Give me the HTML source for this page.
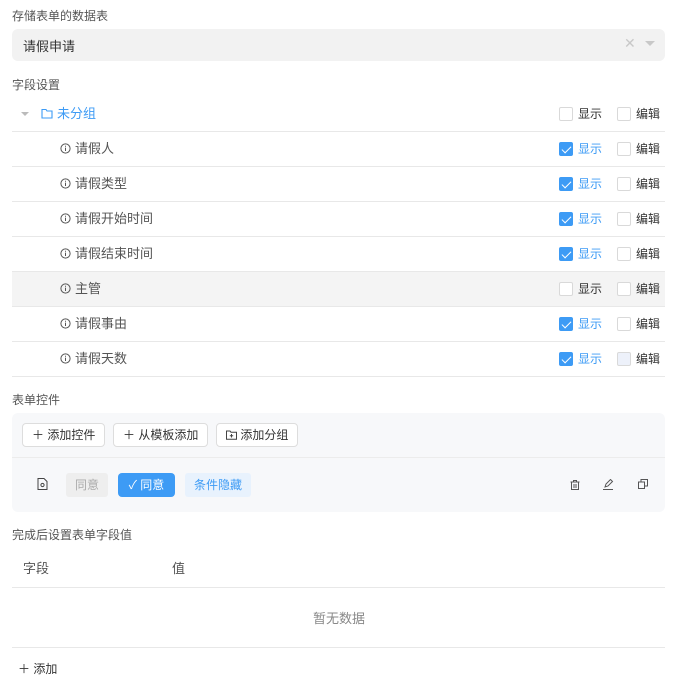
<!DOCTYPE html>
<html><head><meta charset="utf-8"><style>
*{box-sizing:border-box;margin:0;padding:0}
body{width:684px;height:684px;background:#fff;font-family:"Liberation Sans","Noto Sans CJK SC",sans-serif;font-size:13px;color:#333;position:relative;overflow:hidden}
.abs{position:absolute}
.lbl{position:absolute;left:12px;font-size:12px;color:#555}
.sel{left:12px;top:29px;width:653px;height:32px;background:#f2f2f2;border-radius:6px}
.row{position:absolute;left:12px;width:653px;height:35px;border-bottom:1px solid #e8e8e8}
.row .name{position:absolute;left:48px;top:6px;color:#555;font-size:13px}
.row .name svg{vertical-align:-1px;margin-right:4px}
.cb{position:absolute;top:10px;width:14px;height:14px;border:1px solid #d9d9d9;border-radius:2px;background:#fff}
.cb.on{background:#3d9bf5;border-color:#3d9bf5}
.cb.on::after{content:"";position:absolute;left:4px;top:1px;width:4px;height:8px;border:solid #fff;border-width:0 1.5px 1.5px 0;transform:rotate(45deg)}
.t{position:absolute;top:8px;font-size:12px;color:#333}
.t.on{color:#3d9bf5}
.btn{position:absolute;top:10px;height:24px;border:1px solid #ddd;border-radius:4px;background:#fff;font-size:12px;line-height:22px;padding:0 9px;color:#333}
</style></head><body>
<div class="lbl" style="top:7px">存储表单的数据表</div>
<div class="abs sel"><span class="abs" style="left:11px;top:7px;font-size:13px;color:#333">请假申请</span>
<span class="abs" style="left:612px;top:6px;color:#c8c8c8;font-size:14px">✕</span>
<span class="abs" style="left:633px;top:12px;width:0;height:0;border:5px solid transparent;border-top:5px solid #c8c8c8"></span></div>
<div class="lbl" style="top:76px">字段设置</div>

<div class="row" style="top:97px">
<span class="abs" style="left:9px;top:15px;border:4px solid transparent;border-top:4px solid #bbb"></span>
<span class="abs" style="left:29px;top:6px;color:#3d9bf5;font-size:13px"><svg width="12" height="11" viewBox="0 0 12 11" style="vertical-align:-1px;margin-right:4px"><path d="M1 1.5h4l1 1.5h5v7H1z" fill="none" stroke="#3d9bf5" stroke-width="1.1"/></svg>未分组</span>
<span class="cb" style="left:547px"></span><span class="t" style="left:566px">显示</span>
<span class="cb" style="left:605px"></span><span class="t" style="left:624px">编辑</span></div>

<div class="row" style="top:132px"><span class="name"><svg width="11" height="11" viewBox="0 0 11 11"><circle cx="5.5" cy="5.5" r="4.6" fill="none" stroke="#555"/><path d="M5.5 4.6v3.4M5.5 2.8v.9" stroke="#555"/></svg>请假人</span>
<span class="cb on" style="left:547px"></span><span class="t on" style="left:566px">显示</span><span class="cb" style="left:605px"></span><span class="t" style="left:624px">编辑</span></div>
<div class="row" style="top:167px"><span class="name"><svg width="11" height="11" viewBox="0 0 11 11"><circle cx="5.5" cy="5.5" r="4.6" fill="none" stroke="#555"/><path d="M5.5 4.6v3.4M5.5 2.8v.9" stroke="#555"/></svg>请假类型</span>
<span class="cb on" style="left:547px"></span><span class="t on" style="left:566px">显示</span><span class="cb" style="left:605px"></span><span class="t" style="left:624px">编辑</span></div>
<div class="row" style="top:202px"><span class="name"><svg width="11" height="11" viewBox="0 0 11 11"><circle cx="5.5" cy="5.5" r="4.6" fill="none" stroke="#555"/><path d="M5.5 4.6v3.4M5.5 2.8v.9" stroke="#555"/></svg>请假开始时间</span>
<span class="cb on" style="left:547px"></span><span class="t on" style="left:566px">显示</span><span class="cb" style="left:605px"></span><span class="t" style="left:624px">编辑</span></div>
<div class="row" style="top:237px"><span class="name"><svg width="11" height="11" viewBox="0 0 11 11"><circle cx="5.5" cy="5.5" r="4.6" fill="none" stroke="#555"/><path d="M5.5 4.6v3.4M5.5 2.8v.9" stroke="#555"/></svg>请假结束时间</span>
<span class="cb on" style="left:547px"></span><span class="t on" style="left:566px">显示</span><span class="cb" style="left:605px"></span><span class="t" style="left:624px">编辑</span></div>
<div class="row" style="top:272px;background:#f4f4f4"><span class="name"><svg width="11" height="11" viewBox="0 0 11 11"><circle cx="5.5" cy="5.5" r="4.6" fill="none" stroke="#555"/><path d="M5.5 4.6v3.4M5.5 2.8v.9" stroke="#555"/></svg>主管</span>
<span class="cb" style="left:547px"></span><span class="t" style="left:566px">显示</span><span class="cb" style="left:605px"></span><span class="t" style="left:624px">编辑</span></div>
<div class="row" style="top:307px"><span class="name"><svg width="11" height="11" viewBox="0 0 11 11"><circle cx="5.5" cy="5.5" r="4.6" fill="none" stroke="#555"/><path d="M5.5 4.6v3.4M5.5 2.8v.9" stroke="#555"/></svg>请假事由</span>
<span class="cb on" style="left:547px"></span><span class="t on" style="left:566px">显示</span><span class="cb" style="left:605px"></span><span class="t" style="left:624px">编辑</span></div>
<div class="row" style="top:342px"><span class="name"><svg width="11" height="11" viewBox="0 0 11 11"><circle cx="5.5" cy="5.5" r="4.6" fill="none" stroke="#555"/><path d="M5.5 4.6v3.4M5.5 2.8v.9" stroke="#555"/></svg>请假天数</span>
<span class="cb on" style="left:547px"></span><span class="t on" style="left:566px">显示</span><span class="cb" style="left:605px;background:#edf1fa"></span><span class="t" style="left:624px">编辑</span></div>

<div class="lbl" style="top:391px">表单控件</div>
<div class="abs" style="left:12px;top:413px;width:653px;height:99px;background:#f7f8fa;border-radius:6px">
<span class="btn" style="left:10px">＋ 添加控件</span>
<span class="btn" style="left:101px">＋ 从模板添加</span>
<span class="btn" style="left:204px"><svg width="11" height="10" viewBox="0 0 11 10" style="vertical-align:-1px"><path d="M.5 1h3.5l1 1.2h5.5v7H.5z M5.5 4v3.5M3.8 5.7h3.4" fill="none" stroke="#444"/></svg> 添加分组</span>
<div class="abs" style="left:0;top:44px;width:653px;border-top:1px solid #ececec"></div>
<svg class="abs" style="left:25px;top:65px" width="11" height="12" viewBox="0 0 11 12"><path d="M1 .5h6l3 3v8H1z" fill="none" stroke="#444"/><circle cx="5.5" cy="7" r="1.6" fill="none" stroke="#444"/></svg>
<span class="abs" style="left:54px;top:60px;width:42px;height:24px;background:#eee;border-radius:3px;color:#aaa;font-size:12px;line-height:24px;text-align:center">同意</span>
<span class="abs" style="left:106px;top:60px;width:57px;height:24px;background:#3d9bf5;border-radius:4px;color:#fff;font-size:12px;line-height:24px;text-align:center">✓ 同意</span>
<span class="abs" style="left:173px;top:60px;width:66px;height:24px;background:#e8f2fd;border-radius:3px;color:#3d9bf5;font-size:12px;line-height:24px;text-align:center">条件隐藏</span>
<svg class="abs" style="left:558px;top:67px" width="10" height="10" viewBox="0 0 10 10"><path d="M.5 2h9M3.5 2V.5h3V2M1.5 2v7.5h7V2M4 4v4M6 4v4" fill="none" stroke="#555"/></svg>
<svg class="abs" style="left:591px;top:66px" width="11" height="11" viewBox="0 0 11 11"><path d="M2 8l1-3 4.5-4.5 2 2L5 7z M0 10.5h10" fill="none" stroke="#555"/></svg>
<svg class="abs" style="left:626px;top:66px" width="10" height="10" viewBox="0 0 10 10"><path d="M.5 3h6v6.5h-6z M3 3V.5h6.5V7H6.5" fill="none" stroke="#555"/></svg>
</div>

<div class="lbl" style="top:526px">完成后设置表单字段值</div>
<span class="abs" style="left:23px;top:558px;font-size:13px;color:#555">字段</span>
<span class="abs" style="left:172px;top:558px;font-size:13px;color:#555">值</span>
<div class="abs" style="left:12px;top:587px;width:653px;border-top:1px solid #e8e8e8"></div>
<span class="abs" style="left:313px;top:608px;font-size:13px;color:#888">暂无数据</span>
<div class="abs" style="left:12px;top:647px;width:653px;border-top:1px solid #e8e8e8"></div>
<span class="abs" style="left:18px;top:660px;font-size:12px;color:#333">＋ 添加</span>
</body></html>
